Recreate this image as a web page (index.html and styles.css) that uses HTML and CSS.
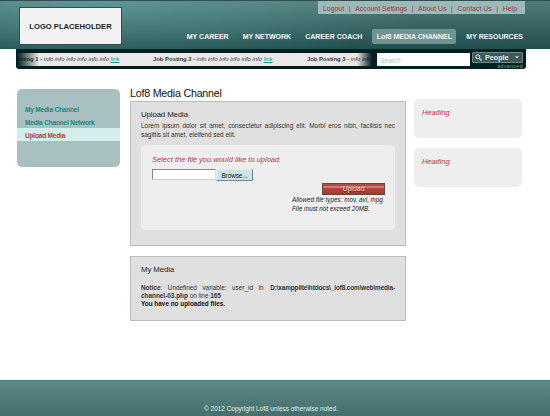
FILE: index.html
```html
<!DOCTYPE html>
<html lang="en">
<head>
<meta charset="utf-8">
<title>Lof8 Media Channel</title>
<link rel="stylesheet" href="styles.css">
</head>
<body>
<header class="header">
  <div class="logo">LOGO PLACEHOLDER</div>
  <div class="header-right">
    <div class="account"><a>Logout</a><i>|</i><a>Account Settings</a><i>|</i><a>About Us</a><i>|</i><a>Contact Us</a><i>|</i><a>Help</a></div>
    <nav class="nav"><a>MY CAREER</a><a>MY NETWORK</a><a>CAREER COACH</a><a class="active">Lof8 MEDIA CHANNEL</a><a>MY RESOURCES</a></nav>
  </div>
</header>
<div class="bar">
  <div class="ticker">
    <div class="post first"><b>Job Posting 1 - </b><em>info info info info info info</em> <a>link</a></div>
    <div class="post second"><b>Job Posting 2 - </b><em>info info info info info info</em> <a>link</a></div>
    <div class="post"><b>Job Posting 3 - </b><em>info info</em></div>
  </div>
  <div class="search">Search</div>
  <div class="scope">
    <div class="people">
      <svg width="7" height="7" viewBox="0 0 7 7"><circle cx="2.8" cy="2.8" r="2" fill="none" stroke="#e4eeee"/><path d="M4.3 4.3L6.5 6.5" stroke="#e4eeee" stroke-width="1.2"/></svg>
      <span>People</span>
      <svg class="caret" width="4" height="3" viewBox="0 0 4 3"><path d="M0 .3h4L2 2.6z" fill="#d5e2e2"/></svg>
    </div>
    <div class="advanced">advanced</div>
  </div>
</div>
<main class="main">
  <aside class="menu"><a>My Media Channel</a><a>Media Channel Network</a><a class="current">Upload Media</a></aside>
  <section class="content">
    <h1>Lof8 Media Channel</h1>
    <div class="panel upload-panel">
      <h2>Upload Media</h2>
      <p class="intro">Lorem ipsum dolor sit amet, consectetur adipiscing elit. Morbi eros nibh, facilisis nec sagittis sit amet, eleifend sed elit.</p>
      <div class="upload">
        <h3>Select the file you would like to upload</h3>
        <div class="file"><div class="field"></div><div class="browse">Browse...</div></div>
        <div class="submit"><div class="button">Upload</div><div class="hint">Allowed file types: mov, avi, mpg.<br>File must not exceed 20MB.</div></div>
      </div>
    </div>
    <div class="panel media-panel">
      <h2>My Media</h2>
      <p class="notice"><b>Notice</b>: Undefined variable: user_id in <b class="path">D:\xampplite\htdocs\_lof8.com\web\media-</b></p>
      <p class="notice-end"><b>channel-03.php</b> on line <b>165</b></p>
      <p class="none"><b>You have no uploaded files.</b></p>
    </div>
  </section>
  <aside class="side"><div class="card">Heading</div><div class="card">Heading</div></aside>
</main>
<footer class="footer">© 2012 Copyright Lof8 unless otherwise noted.</footer>
</body>
</html>
```

FILE: styles.css
```css
* { box-sizing: border-box; }
body { margin: 0; height: 416px; overflow: hidden; display: flex; flex-direction: column; background: #fff; font-family: "Liberation Sans", Arial, sans-serif; font-size: 6.4px; color: #333; white-space: nowrap; }
h1, h2, h3, p { margin: 0; font-weight: normal; }
.header { height: 49px; flex: none; display: flex; justify-content: space-between; padding: 0 25px 0 19px; border-top: 1px solid #304f50; background: radial-gradient(ellipse 330px 70px at 100px 0, rgba(110,175,170,.5), transparent), linear-gradient(#4f7c7b, #204f4e); }
.logo { width: 103px; height: 38px; margin-top: 6px; border: 1px solid #304f50; background: #f2f2f2; color: #222; font-weight: bold; font-size: 7.6px; line-height: 37px; text-align: center; }
.header-right { width: 340px; display: flex; flex-direction: column; align-items: flex-end; }
.account { width: 207px; height: 13px; padding: 0 8px 0 5px; display: flex; justify-content: space-between; background: #9fb9b8; color: #8b3a38; font-size: 6.9px; line-height: 15px; }
.account i { font-style: normal; }
.nav { display: flex; margin: 15px 2px 0 0; color: #f0f6f6; font-weight: bold; font-size: 7px; line-height: 15px; }
.nav a { height: 15px; margin-left: 14px; }
.nav .active { width: 84px; margin-left: 10px; margin-right: -4px; text-align: center; background: #6f9492; border-radius: 2px; }
.bar { width: 510px; height: 20px; flex: none; margin-left: 16px; padding: 3px 3px 0 1px; display: flex; background: #02201f; border-radius: 0 0 3px 3px; }
.ticker { width: 355px; height: 13px; margin-top: 1px; overflow: hidden; position: relative; display: flex; background: #e9e9e9; font-size: 5.9px; line-height: 13px; }
.ticker::after { content: ""; position: absolute; inset: 0; background: linear-gradient(90deg, #02201f, rgba(2,32,31,0) 22px, rgba(2,32,31,0) 340px, #02201f); }
.post { flex: none; }
.first { width: 136px; text-indent: -17px; }
.second { width: 154px; }
.post a { color: #27908b; text-decoration: underline; }
.search { width: 93px; height: 13px; margin: 1px 2px 0 5px; padding-left: 3px; background: #fff; color: #9fc5c3; font-size: 6.5px; font-style: italic; line-height: 15px; }
.scope { width: 51px; }
.people { height: 11px; display: flex; align-items: center; gap: 3px; padding: 0 3px 0 2px; border: 1px solid #718987; background: #3b5a58; border-radius: 1px; color: #e4eeee; font-weight: bold; font-size: 7.2px; line-height: 9px; }
.caret { margin-left: auto; }
.advanced { color: #78a5a2; font-size: 5px; line-height: 6px; letter-spacing: .5px; text-align: right; }
.main { flex: 1; display: flex; align-items: flex-start; padding-left: 17px; }
.menu { width: 103px; height: 78px; margin-top: 20px; padding-top: 13px; border-radius: 5px; background: #a8c0bf; color: #238680; font-weight: bold; font-size: 6.5px; letter-spacing: -.18px; line-height: 15px; }
.menu a { display: block; height: 13px; padding-left: 8px; }
.menu .current { background: #d3eeed; color: #b83a35; }
.content { width: 276px; margin: 17px 8px 0 10px; }
h1 { height: 15px; color: #111; font-size: 10.7px; letter-spacing: -.22px; line-height: 15px; }
.panel { border: 1px solid #b9bdbc; background: #e0e0e0; padding: 0 10px; }
.upload-panel { height: 145px; padding-top: 7px; }
h2 { color: #222; font-size: 7.8px; letter-spacing: -.1px; line-height: 12px; }
.intro { width: 254px; font-size: 6.45px; line-height: 9px; text-align: justify; white-space: normal; }
.upload { height: 85px; margin-top: 6px; padding: 9px 10px 0 11px; background: #eee; border-radius: 5px; }
h3 { color: #b83a35; font-size: 7.5px; font-style: italic; line-height: 12px; }
.file { display: flex; margin-top: 3px; height: 12px; }
.field { width: 64px; height: 11px; border: 1px solid #888; border-right-color: #ddd; border-bottom-color: #ccc; background: #fff; }
.browse { width: 37px; border: 1px solid #e2f0f1; border-right-color: #71898a; border-bottom-color: #71898a; background: #cee1e4; color: #111; text-align: center; font-size: 6.3px; line-height: 11px; }
.submit { display: flex; flex-direction: column; align-items: flex-end; margin-top: 2px; }
.button { width: 63px; height: 12px; border: 1px solid #654443; background: linear-gradient(#b44a44 0 15%, #cf7973 25% 35%, #b9443f 45%, #a83732); color: #f7d9d6; text-align: center; font-size: 7px; line-height: 10px; text-shadow: 0 1px 1px #6d2522; }
.hint { width: 93px; font-size: 6.3px; font-style: italic; line-height: 9px; color: #222; }
.media-panel { height: 65px; margin-top: 10px; padding-top: 7px; }
.notice { width: 254px; margin-top: 8px; line-height: 8px; display: flex; white-space: pre; word-spacing: 3.7px; }
.path { margin-left: auto; word-spacing: 0; letter-spacing: -.11px; }
.notice-end, .none { line-height: 8px; }
.none b { color: #111; }
.side { display: flex; flex-direction: column; gap: 10px; margin-top: 30px; }
.card { width: 108px; height: 39px; padding: 8px; border-radius: 5px; background: #eee; color: #b83a35; font-size: 7.4px; font-style: italic; line-height: 12px; }
.footer { height: 36px; flex: none; padding: 22px 8px 0 0; border-top: 1px solid #4d7775; background: linear-gradient(#5f8886, #446f6d); color: #e3eeee; font-size: 6.45px; line-height: 12px; text-align: center; }
```
